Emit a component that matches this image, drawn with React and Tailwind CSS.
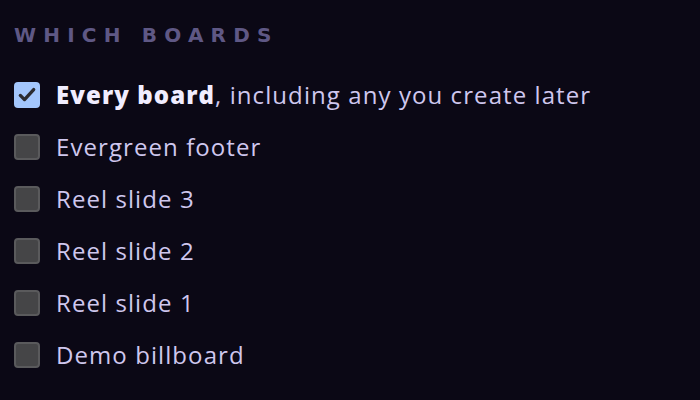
import { useState } from 'react';

const boards = ['Evergreen footer', 'Reel slide 3', 'Reel slide 2', 'Reel slide 1', 'Demo billboard'];

function Box({ checked }) {
  if (checked) {
    return (
      <span className="flex h-[26px] w-[26px] shrink-0 items-center justify-center rounded-[4px] bg-[#a3c6fc]">
        <svg width="20" height="20" viewBox="0 0 24 24" fill="none" stroke="#2b2b30" strokeWidth="4" strokeLinecap="round" strokeLinejoin="round">
          <path d="M4 12.5l5 5L20 5.5" />
        </svg>
      </span>
    );
  }
  return <span className="h-[26px] w-[26px] shrink-0 rounded-[4px] border-2 border-[#5a5a5c] bg-[#454547]" />;
}

export default function App() {
  const [all, setAll] = useState(true);
  const [picked, setPicked] = useState({});

  return (
    <div className="h-[400px] w-[700px] bg-[#0b0815] px-[14px] pt-[23px] font-['Open_Sans',sans-serif]">
      <h3 className="font-['DejaVu_Sans',sans-serif] text-[20px] font-bold uppercase leading-[24px] tracking-[0.36em] text-[#5f5885]">
        Which boards
      </h3>
      <div className="mt-[35px] flex flex-col gap-[26px]">
        <label className="flex cursor-pointer items-center gap-4" onClick={() => setAll(!all)}>
          <Box checked={all} />
          <span className="text-[24px] leading-[26px] tracking-[0.045em] text-[#cfc7ee]">
            <b className="font-extrabold text-[#f1edff]">Every board</b>, including any you create later
          </span>
        </label>
        {boards.map((b) => (
          <label
            key={b}
            className="flex cursor-pointer items-center gap-4"
            onClick={() => setPicked({ ...picked, [b]: !picked[b] })}
          >
            <Box checked={!!picked[b]} />
            <span className="text-[24px] leading-[26px] tracking-[0.045em] text-[#cfc7ee]">{b}</span>
          </label>
        ))}
      </div>
    </div>
  );
}
